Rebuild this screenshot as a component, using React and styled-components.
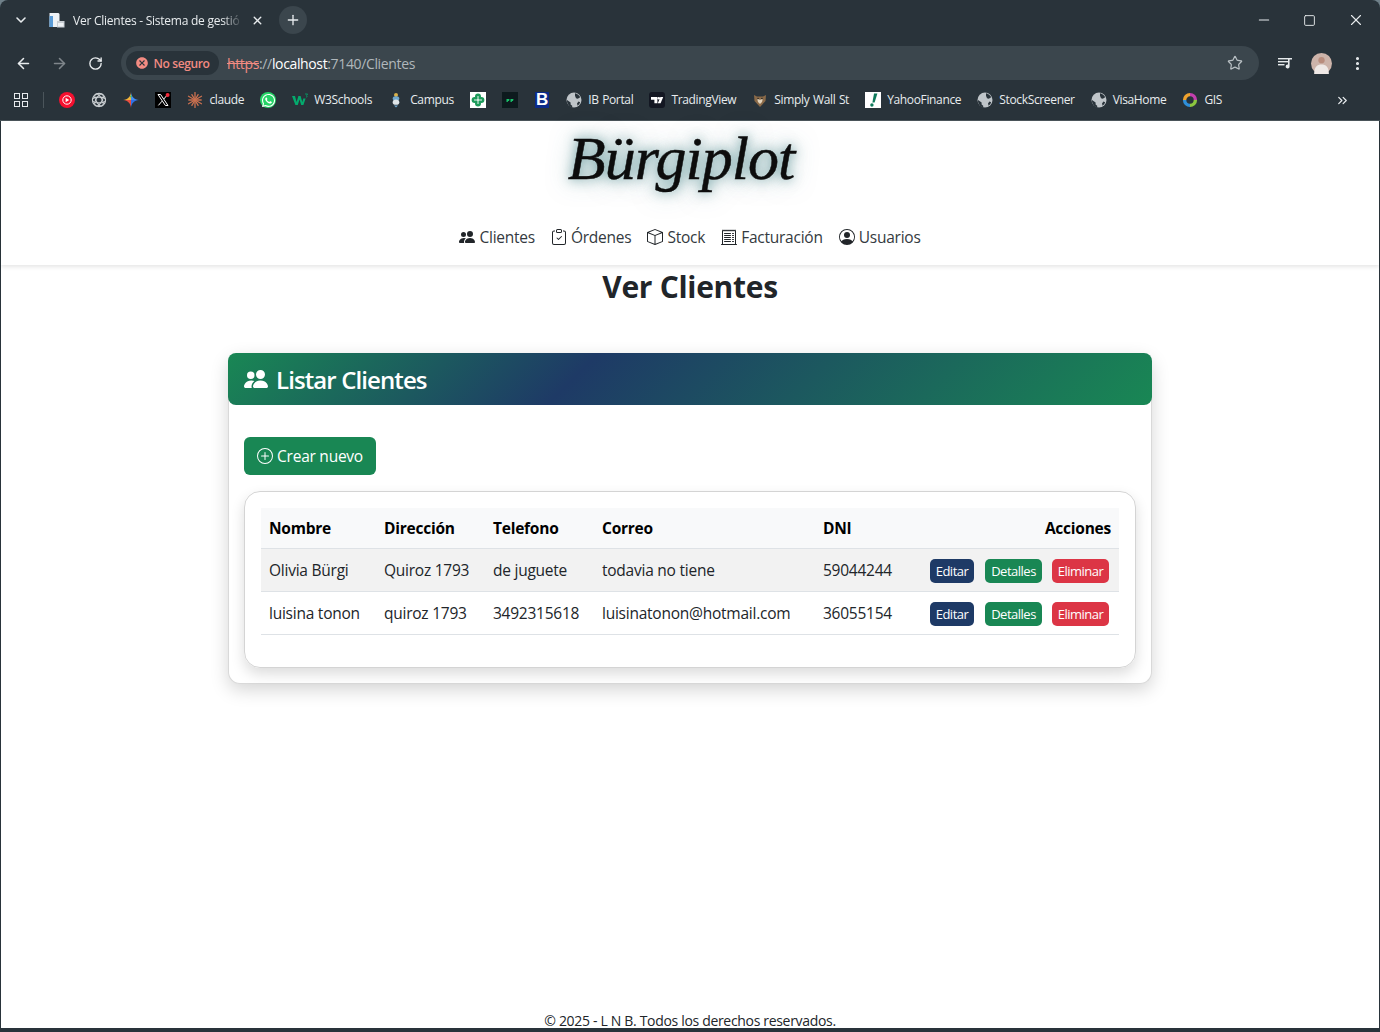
import React from 'react';
import styled, { createGlobalStyle } from 'styled-components';
import { ArrowLeft, ArrowRight, RotateCw, Star, X, Plus, ChevronDown, Minus, Square, EllipsisVertical, ChevronsRight } from 'lucide-react';
import { BsPeopleFill, BsClipboardCheck, BsBox, BsReceiptCutoff, BsPersonCircle, BsPlusCircle } from 'react-icons/bs';
import { MdCancel } from 'react-icons/md';
import { FaWhatsapp } from 'react-icons/fa';

const font = '"Open Sans", "Noto Sans", sans-serif';

const GlobalStyle = createGlobalStyle`
  html, body { margin: 0; padding: 0; background: #6f8089; }
  body { font-family: ${font}; }
  * { box-sizing: border-box; }
`;

// ---- favicons ----
const YtIcon = () => (
  <svg width="16" height="16" viewBox="0 0 16 16">
    <circle cx="8" cy="8" r="8" fill="#f5102f" />
    <circle cx="8" cy="8" r="4.2" fill="none" stroke="#fff" strokeWidth="1" />
    <path d="M6.6 5.8v4.4L10.2 8z" fill="#fff" />
  </svg>
);
const GptIcon = () => (
  <svg width="16" height="16" viewBox="0 0 16 16" fill="none" stroke="#c9ced1" strokeWidth="1.1">
    <circle cx="8" cy="8" r="6.6" />
    <ellipse cx="8" cy="8" rx="6.6" ry="2.9" />
    <ellipse cx="8" cy="8" rx="6.6" ry="2.9" transform="rotate(60 8 8)" />
    <ellipse cx="8" cy="8" rx="6.6" ry="2.9" transform="rotate(120 8 8)" />
  </svg>
);
const GeminiIcon = () => (
  <svg width="16" height="16" viewBox="0 0 16 16">
    <path d="M8 0C8.4 4.6 11 7.4 16 8L8 8z" fill="#3f8cf2" />
    <path d="M8 0C7.6 4.6 5 7.4 0 8L8 8z" fill="#f2b33a" />
    <path d="M16 8C11 8.6 8.4 11.4 8 16L8 8z" fill="#2f6fe4" />
    <path d="M0 8C5 8.6 7.6 11.4 8 16L8 8z" fill="#e8503f" />
    <circle cx="8" cy="4.6" r="1" fill="#49b76b" />
  </svg>
);
const XIcon = () => (
  <svg width="16" height="16" viewBox="0 0 16 16">
    <rect width="16" height="16" fill="#000" />
    <path d="M3 2.5h2.6l7.4 11h-2.6z" fill="none" stroke="#fff" strokeWidth="1" />
    <path d="M12.4 2.8 8.8 7M7 9.2 3.4 13.4" stroke="#fff" strokeWidth="1" />
    <circle cx="12.6" cy="3" r="2" fill="#f2293a" />
  </svg>
);
const ClaudeIcon = () => (
  <svg width="16" height="16" viewBox="0 0 16 16" stroke="#c9704f" strokeWidth="1.3" strokeLinecap="round">
    {[0, 30, 60, 90, 120, 150, 180, 210, 240, 270, 300, 330].map((a) => (
      <line key={a} x1="8" y1="8" x2="8" y2={a % 60 === 0 ? 0.5 : 1.8} transform={`rotate(${a} 8 8)`} />
    ))}
  </svg>
);
const WhatsIcon = () => (
  <WhatsWrap>
    <FaWhatsapp size={15} color="#fff" />
  </WhatsWrap>
);
const W3Icon = () => (
  <svg width="16" height="16" viewBox="0 0 16 16">
    <path d="M0 4h3l1.6 6L6.4 4h2.2l1.7 6 1-3.4h2.3L11.4 13H9.2L7.5 7.6 5.8 13H3.4z" fill="#04aa6d" />
    <path d="M13 2h2.6l-1 1.4c.8.3.9 1.6-.6 1.8" fill="none" stroke="#04aa6d" strokeWidth=".8" />
  </svg>
);
const EmblemIcon = () => (
  <svg width="16" height="16" viewBox="0 0 16 16">
    <circle cx="8" cy="3" r="2" fill="#d9b24a" />
    <ellipse cx="8" cy="6.6" rx="3.3" ry="2.4" fill="#6fa8cf" />
    <ellipse cx="8" cy="10.2" rx="3.3" ry="2.6" fill="#dfe5e8" />
    <path d="M6 13.5h4L8 15.5z" fill="#6fa8cf" />
  </svg>
);
const CloverIcon = () => (
  <svg width="16" height="16" viewBox="0 0 16 16">
    <rect width="16" height="16" fill="#fff" />
    <g fill="#1c9a5a">
      <circle cx="8" cy="4.6" r="3" />
      <circle cx="8" cy="11.4" r="3" />
      <circle cx="4.6" cy="8" r="3" />
      <circle cx="11.4" cy="8" r="3" />
    </g>
    <path d="M8 4v8M4 8h8" stroke="#fff" strokeWidth=".9" />
  </svg>
);
const DarkIcon = () => (
  <svg width="16" height="16" viewBox="0 0 16 16">
    <rect width="16" height="16" fill="#0d1a1e" />
    <path d="M4.5 7h3l-.5 2H6l-.3 1H4.5zM8.5 7h3l-.5 2h-1l-.3 1H8.5z" fill="#19c26b" />
  </svg>
);
const BIcon = () => <BFav>B</BFav>;
const GlobeIcon = () => (
  <svg width="16" height="16" viewBox="0 0 16 16">
    <circle cx="8" cy="8" r="7.5" fill="#bfc5c9" />
    <path d="M9 1.2c2.3.4 4.2 2 5.2 4l-2.4 1.6-1.8-.6-1-2.4zM1 8l3.6 2.6v1.8l1.6 1.4v1.4C3 14.8.8 11.8 1 8zM12.4 9.6l1.8.6c-.5 1.5-1.4 2.7-2.6 3.6l-.6-2.2z" fill="#29333a" />
  </svg>
);
const TvIcon = () => (
  <svg width="16" height="16" viewBox="0 0 16 16">
    <rect width="16" height="16" rx="3" fill="#131722" />
    <path d="M2 5h6.4v6.2H5.4V7.8H2z" fill="#fff" />
    <circle cx="9.8" cy="6.3" r="1.3" fill="#fff" />
    <path d="M14.2 5l-2.6 6.2H8.8L11.4 5z" fill="#fff" />
  </svg>
);
const WallIcon = () => (
  <svg width="16" height="16" viewBox="0 0 16 16">
    <path d="M2 3l3 1.5h6L14 3l-.5 6L8 15 2.5 9z" fill="#8a6a48" />
    <path d="M5 6l3 2 3-2-1 4-2 2-2-2z" fill="#e3d4bd" />
    <circle cx="6" cy="6.6" r=".8" fill="#201a14" />
    <circle cx="10" cy="6.6" r=".8" fill="#201a14" />
  </svg>
);
const YahooIcon = () => (
  <svg width="16" height="16" viewBox="0 0 16 16">
    <rect width="16" height="16" fill="#fff" />
    <path d="M9 1.5h3.4L9.6 10.5H7.4z" fill="#0f7a5c" />
    <circle cx="6.9" cy="13" r="1.7" fill="#0f7a5c" />
  </svg>
);
const GisIcon = () => (
  <svg width="16" height="16" viewBox="0 0 16 16" fill="none" strokeWidth="3.4">
    <path d="M8 2.6 A5.4 5.4 0 0 1 13.4 8" stroke="#c43fae" />
    <path d="M13.4 8 A5.4 5.4 0 0 1 8 13.4" stroke="#8cc63f" />
    <path d="M8 13.4 A5.4 5.4 0 0 1 2.6 8" stroke="#2f8fd8" />
    <path d="M2.6 8 A5.4 5.4 0 0 1 8 2.6" stroke="#f0a32e" />
  </svg>
);
const TabIcon = () => (
  <svg width="16" height="16" viewBox="0 0 16 16">
    <path d="M0.5 1h9l1 1v13h-10z" fill="#eef2f5" />
    <rect x="0.5" y="4" width="3.5" height="11" fill="#5a9bd5" />
    <rect x="8" y="9" width="7.5" height="6.5" fill="#c8ced3" />
    <rect x="9" y="11" width="5.5" height="3.5" fill="#eef2f5" />
  </svg>
);
const PlaylistIcon = () => (
  <svg width="16" height="16" viewBox="0 0 16 16" fill="#e6eaec">
    <rect x="1" y="3" width="10" height="1.4" />
    <rect x="1" y="6" width="10" height="1.4" />
    <rect x="1" y="9" width="6.5" height="1.4" />
    <path d="M11 3h4v1.6h-2.4v7a2 2 0 1 1-1.6-2z" />
  </svg>
);
const AvatarIcon = () => (
  <svg width="21" height="21" viewBox="0 0 20 20">
    <circle cx="10" cy="10" r="10" fill="#cdb4aa" />
    <path d="M3 20c0-7 3-9 7-9s7 2 7 9z" fill="#efe9e6" />
    <circle cx="10" cy="6.8" r="3" fill="#b98d7d" />
  </svg>
);

// ---- data ----
const bookmarks = [
  { icon: YtIcon },
  { icon: GptIcon },
  { icon: GeminiIcon },
  { icon: XIcon },
  { icon: ClaudeIcon, label: 'claude' },
  { icon: WhatsIcon },
  { icon: W3Icon, label: 'W3Schools' },
  { icon: EmblemIcon, label: 'Campus' },
  { icon: CloverIcon },
  { icon: DarkIcon },
  { icon: BIcon },
  { icon: GlobeIcon, label: 'IB Portal' },
  { icon: TvIcon, label: 'TradingView' },
  { icon: WallIcon, label: 'Simply Wall St' },
  { icon: YahooIcon, label: 'YahooFinance' },
  { icon: GlobeIcon, label: 'StockScreener' },
  { icon: GlobeIcon, label: 'VisaHome' },
  { icon: GisIcon, label: 'GIS' },
];

const navLinks = [
  { icon: BsPeopleFill, label: 'Clientes' },
  { icon: BsClipboardCheck, label: 'Órdenes' },
  { icon: BsBox, label: 'Stock' },
  { icon: BsReceiptCutoff, label: 'Facturación' },
  { icon: BsPersonCircle, label: 'Usuarios' },
];

const clientes = [
  { nombre: 'Olivia Bürgi', direccion: 'Quiroz 1793', telefono: 'de juguete', correo: 'todavia no tiene', dni: '59044244' },
  { nombre: 'luisina tonon', direccion: 'quiroz 1793', telefono: '3492315618', correo: 'luisinatonon@hotmail.com', dni: '36055154' },
];

const App = () => (
  <Window>
    <GlobalStyle />
    <Chrome>
      <TabStrip>
        <TabSearch><ChevronDown size={16} strokeWidth={2.4} /></TabSearch>
        <Tab>
          <TabIcon />
          <TabTitle>Ver Clientes - Sistema de gestió</TabTitle>
          <X size={13} strokeWidth={2.6} />
        </Tab>
        <NewTab><Plus size={16} strokeWidth={2} /></NewTab>
        <WindowControls>
          <Minus size={16} strokeWidth={1.6} />
          <Square size={13} strokeWidth={1.7} />
          <X size={18} strokeWidth={1.5} />
        </WindowControls>
      </TabStrip>
      <Toolbar>
        <ToolIcon><ArrowLeft size={17} strokeWidth={2.2} /></ToolIcon>
        <ToolIcon $dim><ArrowRight size={17} strokeWidth={2.2} /></ToolIcon>
        <ToolIcon><RotateCw size={15} strokeWidth={2.2} /></ToolIcon>
        <Omnibox>
          <SecurityPill><MdCancel size={14} />No seguro</SecurityPill>
          <Url><Scheme>https</Scheme><UrlDim>://</UrlDim>localhost<UrlDim>:7140/Clientes</UrlDim></Url>
          <Star size={16} color="#b9c0c4" strokeWidth={1.8} />
        </Omnibox>
        <ToolbarEnd>
          <PlaylistIcon />
          <AvatarIcon />
          <EllipsisVertical size={17} strokeWidth={2.4} />
        </ToolbarEnd>
      </Toolbar>
      <BookmarkBar>
        <AppsGrid><i /><i /><i /><i /></AppsGrid>
        <BarDivider />
        {bookmarks.map((b, i) => (
          <Bookmark key={i}>
            <FavSlot><b.icon /></FavSlot>
            {b.label && <span>{b.label}</span>}
          </Bookmark>
        ))}
        <MoreBookmarks><ChevronsRight size={15} strokeWidth={2} /></MoreBookmarks>
      </BookmarkBar>
    </Chrome>

    <Page>
      <Header>
        <LogoArea><Logo>Bürgiplot</Logo></LogoArea>
        <Nav>
          {navLinks.map((l) => (
            <NavItem key={l.label}><l.icon /><span>{l.label}</span></NavItem>
          ))}
        </Nav>
      </Header>
      <Main>
        <Title>Ver Clientes</Title>
        <Card>
          <CardHeader><BsPeopleFill size={24} />Listar Clientes</CardHeader>
          <CardBody>
            <CreateButton><BsPlusCircle size={16} />Crear nuevo</CreateButton>
            <TablePanel>
              <Table>
                <colgroup>
                  <Col $w={115} /><Col $w={109} /><Col $w={109} /><Col $w={221} /><Col $w={107} /><Col $w={197} />
                </colgroup>
                <thead>
                  <tr>
                    <Th>Nombre</Th><Th>Dirección</Th><Th>Telefono</Th><Th>Correo</Th><Th>DNI</Th>
                    <Th $right>Acciones</Th>
                  </tr>
                </thead>
                <tbody>
                  {clientes.map((c) => (
                    <Row key={c.dni}>
                      <Td>{c.nombre}</Td>
                      <Td>{c.direccion}</Td>
                      <Td>{c.telefono}</Td>
                      <Td>{c.correo}</Td>
                      <Td>{c.dni}</Td>
                      <Td>
                        <Actions>
                          <ActionButton $color="#1e3a66" $w={44}>Editar</ActionButton>
                          <ActionButton $color="#198754" $w={57}>Detalles</ActionButton>
                          <ActionButton $color="#dc3545" $w={57}>Eliminar</ActionButton>
                        </Actions>
                      </Td>
                    </Row>
                  ))}
                </tbody>
              </Table>
            </TablePanel>
          </CardBody>
        </Card>
      </Main>
      <Footer>© 2025 - L N B. Todos los derechos reservados.</Footer>
    </Page>
  </Window>
);

export default App;

const Window = styled.div`
  width: 1380px;
  height: 1032px;
  display: flex;
  flex-direction: column;
  background: #29333a;
  border-radius: 8px 8px 0 0;
  overflow: hidden;
  padding: 0 1px 4px;
`;

const Chrome = styled.div`
  height: 121px;
  margin: 0 -1px;
  color: #e8ecee;
  font-size: 12px;
  flex-shrink: 0;
  border-bottom: 1px solid #4b555b;
`;

const TabStrip = styled.div`
  height: 40px;
  display: flex;
  align-items: center;
  padding-left: 13px;
`;

const TabSearch = styled.div`
  width: 16px;
  display: flex;
  margin-right: 20px;
`;

const Tab = styled.div`
  width: 228px;
  display: flex;
  align-items: center;
  gap: 8px;
  svg { flex-shrink: 0; }
`;

const TabTitle = styled.div`
  width: 170px;
  white-space: nowrap;
  font-size: 12px;
  letter-spacing: -0.25px;
  -webkit-mask-image: linear-gradient(90deg, #000 88%, transparent);
  mask-image: linear-gradient(90deg, #000 88%, transparent);
`;

const NewTab = styled.div`
  width: 28px;
  height: 28px;
  margin-left: 2px;
  border-radius: 50%;
  background: #3b464d;
  display: flex;
  align-items: center;
  justify-content: center;
`;

const WindowControls = styled.div`
  margin-left: auto;
  width: 109px;
  margin-right: 15px;
  display: flex;
  align-items: center;
  justify-content: space-between;
`;

const Toolbar = styled.div`
  height: 45px;
  display: flex;
  align-items: center;
  padding: 1px 14px 0 14px;
`;

const ToolIcon = styled.div`
  width: 18px;
  margin-right: 18px;
  display: flex;
  justify-content: center;
  opacity: ${(p) => (p.$dim ? 0.45 : 1)};
`;

const Omnibox = styled.div`
  width: 1138px;
  height: 34px;
  margin-left: -1px;
  border-radius: 17px;
  background: #3b464d;
  display: flex;
  align-items: center;
  padding: 0 16px 0 5px;
`;

const SecurityPill = styled.div`
  height: 24px;
  width: 93px;
  border-radius: 12px;
  background: #29333a;
  color: #f28b82;
  font-weight: 600;
  font-size: 12px;
  letter-spacing: -0.35px;
  display: flex;
  align-items: center;
  justify-content: center;
  gap: 4px;
`;

const Url = styled.div`
  margin-left: 8px;
  flex: 1;
  font-size: 14px;
  letter-spacing: -0.36px;
  color: #fff;
`;

const Scheme = styled.span`
  color: #f28b82;
  text-decoration: line-through;
`;

const UrlDim = styled.span`
  color: #b0b7bb;
`;

const ToolbarEnd = styled.div`
  flex: 1;
  display: flex;
  align-items: center;
  justify-content: space-between;
  padding-left: 18px;
`;

const BookmarkBar = styled.div`
  height: 30px;
  display: flex;
  align-items: center;
  padding-left: 14px;
  font-size: 12px;
  letter-spacing: -0.35px;
  word-spacing: 0.8px;
  white-space: nowrap;
`;

const AppsGrid = styled.div`
  width: 14px;
  height: 14px;
  display: grid;
  grid-template-columns: 6px 6px;
  grid-template-rows: 6px 6px;
  gap: 2px;
  i { border: 1.5px solid #e6eaec; }
`;

const BarDivider = styled.div`
  width: 1px;
  height: 16px;
  margin: 0 15px;
  background: #4b555b;
`;

const Bookmark = styled.div`
  display: flex;
  align-items: center;
  gap: 6px;
  margin-right: 16.1px;
  & > span { line-height: 16px; }
`;

const FavSlot = styled.div`
  width: 16px;
  height: 16px;
  display: flex;
  align-items: center;
  justify-content: center;
`;

const WhatsWrap = styled.div`
  width: 16px;
  height: 16px;
  border-radius: 50%;
  background: #25d366;
  display: flex;
  align-items: center;
  justify-content: center;
`;

const BFav = styled.div`
  width: 14px;
  height: 16px;
  background: #0b2a8a;
  color: #fff;
  font: 700 17px/16px "Liberation Sans", sans-serif;
  letter-spacing: 0;
  text-align: center;
`;

const MoreBookmarks = styled.div`
  margin-left: auto;
  margin-right: 30px;
  display: flex;
`;

const Page = styled.div`
  flex: 1;
  min-height: 0;
  background: #fff;
  color: #212529;
  display: flex;
  flex-direction: column;
  font-size: 15.5px;
  letter-spacing: -0.24px;
`;

const Header = styled.header`
  height: 144px;
  flex-shrink: 0;
  box-shadow: 0 2px 4px rgba(0, 0, 0, 0.1);
  display: flex;
  flex-direction: column;
  align-items: center;
`;

const LogoArea = styled.div`
  height: 84px;
  padding: 0 18px 10px 0;
  display: flex;
  align-items: center;
  justify-content: center;
`;

const Logo = styled.div`
  font-family: "Liberation Serif", serif;
  font-style: italic;
  font-size: 62px;
  line-height: 72px;
  letter-spacing: -1px;
  color: #0d0d0d;
  -webkit-text-stroke: 0.5px #0d0d0d;
  text-shadow: 0 0 12px rgba(60, 125, 130, 0.8), 0 0 24px rgba(60, 125, 130, 0.5);
`;

const Nav = styled.nav`
  margin-top: 20px;
  display: flex;
  gap: 16px;
  height: 24px;
  align-items: center;
`;

const NavItem = styled.a`
  display: flex;
  align-items: center;
  gap: 4px;
  color: #343a40;
  svg { width: 16px; height: 16px; color: #212529; }
`;

const Main = styled.main`
  flex: 1;
  display: flex;
  flex-direction: column;
  align-items: center;
`;

const Title = styled.h1`
  margin: 0;
  height: 44px;
  font-size: 30px;
  line-height: 44px;
  font-weight: 700;
  letter-spacing: -0.3px;
`;

const Card = styled.section`
  width: 924px;
  height: 331px;
  margin-top: 44px;
  border-radius: 12px;
  border: 1px solid #d9d9d9;
  border-top: 0;
  box-shadow: 0 6px 18px rgba(0, 0, 0, 0.17);
  background: #fff;
`;

const CardHeader = styled.div`
  height: 52px;
  margin: 0 -1px;
  border-radius: 8px;
  background: linear-gradient(135deg, #198754 0%, #1e3a66 38%, #198754 100%);
  color: #fff;
  font-size: 24px;
  font-weight: 600;
  letter-spacing: -0.9px;
  display: flex;
  align-items: center;
  gap: 8px;
  padding-left: 16px;
`;

const CardBody = styled.div`
  padding: 32px 15px 16px;
`;

const CreateButton = styled.button`
  height: 38px;
  width: 132px;
  border: 0;
  border-radius: 6px;
  background: #198754;
  color: #fff;
  font-family: ${font};
  font-size: 15.5px;
  letter-spacing: -0.25px;
  display: flex;
  align-items: center;
  justify-content: center;
  gap: 4px;
`;

const TablePanel = styled.div`
  height: 177px;
  margin-top: 16px;
  padding: 16px;
  border-radius: 16px;
  border: 1px solid #d4d4d4;
  box-shadow: 0 6px 14px rgba(0, 0, 0, 0.14);
`;

const Table = styled.table`
  width: 858px;
  table-layout: fixed;
  border-collapse: collapse;
`;

const Col = styled.col`
  width: ${(p) => p.$w}px;
`;

const Th = styled.th`
  height: 40px;
  padding: 0 8px;
  background: #f8f9fa;
  color: #000;
  font-size: 15.5px;
  font-weight: 700;
  text-align: ${(p) => (p.$right ? 'right' : 'left')};
  border-bottom: 1px solid #dee2e6;
`;

const Row = styled.tr`
  &:nth-child(odd) td { background: #f2f2f2; }
`;

const Td = styled.td`
  height: 43px;
  padding: 0 8px;
  white-space: nowrap;
  border-bottom: 1px solid #dee2e6;
`;

const Actions = styled.div`
  display: flex;
  gap: 10px;
  padding-top: 2px;
`;

const ActionButton = styled.button`
  width: ${(p) => p.$w}px;
  height: 24px;
  padding: 0;
  border: 0;
  border-radius: 5px;
  background: ${(p) => p.$color};
  color: #fff;
  font-family: ${font};
  font-size: 13px;
  letter-spacing: -0.5px;
  &:first-child { margin-right: 1px; }
`;

const Footer = styled.footer`
  height: 18px;
  flex-shrink: 0;
  font-size: 14px;
  line-height: 22px;
  letter-spacing: -0.32px;
  text-align: center;
`;
